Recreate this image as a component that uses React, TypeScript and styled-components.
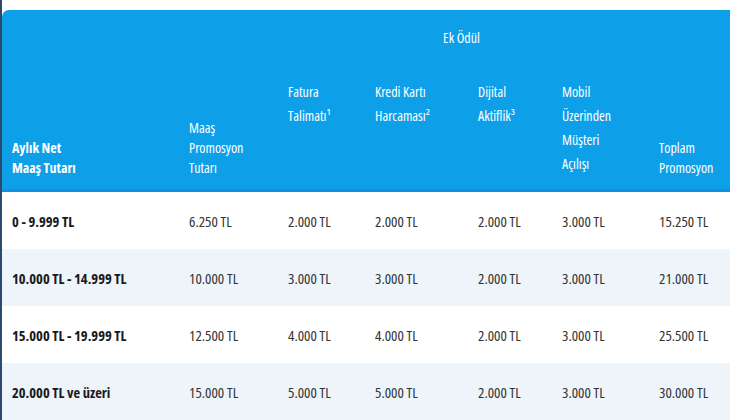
import React from 'react';
import styled, { createGlobalStyle } from 'styled-components';

const rows = [
  { range: '0 - 9.999 TL', values: ['6.250 TL', '2.000 TL', '2.000 TL', '2.000 TL', '3.000 TL', '15.250 TL'] },
  { range: '10.000 TL - 14.999 TL', values: ['10.000 TL', '3.000 TL', '3.000 TL', '2.000 TL', '3.000 TL', '21.000 TL'] },
  { range: '15.000 TL - 19.999 TL', values: ['12.500 TL', '4.000 TL', '4.000 TL', '2.000 TL', '3.000 TL', '25.500 TL'] },
  { range: '20.000 TL ve üzeri', values: ['15.000 TL', '5.000 TL', '5.000 TL', '2.000 TL', '3.000 TL', '30.000 TL'] },
];

const widths = [175, 99, 87, 103, 84, 97, 83];

const App: React.FC = () => {
  return (
    <>
      <GlobalStyle />
      <Wrapper>
        <Table>
          <colgroup>
            {widths.map((w, i) => (
              <col key={i} style={{ width: w }} />
            ))}
          </colgroup>
          <thead>
            <TopRow>
              <Th rowSpan={2} $bottom $bold>
                Aylık Net
                <br />
                Maaş Tutarı
              </Th>
              <Th rowSpan={2} $bottom>
                Maaş
                <br />
                Promosyon
                <br />
                Tutarı
              </Th>
              <GroupTh colSpan={4}>Ek Ödül</GroupTh>
              <Th rowSpan={2} $bottom>
                Toplam
                <br />
                Promosyon
              </Th>
            </TopRow>
            <SubRow>
              <SubTh>
                Fatura
                <br />
                Talimatı¹
              </SubTh>
              <SubTh>
                Kredi Kartı
                <br />
                Harcaması²
              </SubTh>
              <SubTh>
                Dijital
                <br />
                Aktiflik³
              </SubTh>
              <SubTh>
                Mobil
                <br />
                Üzerinden
                <br />
                Müşteri
                <br />
                Açılışı
              </SubTh>
            </SubRow>
          </thead>
          <tbody>
            {rows.map((r, i) => (
              <Row key={r.range} $alt={i % 2 === 1}>
                <RangeCell>{r.range}</RangeCell>
                {r.values.map((v, j) => (
                  <Cell key={j}>{v}</Cell>
                ))}
              </Row>
            ))}
          </tbody>
        </Table>
      </Wrapper>
    </>
  );
};

export default App;

const GlobalStyle = createGlobalStyle`
  body {
    margin: 0;
    background: #ffffff;
    font-family: "Open Sans", "DejaVu Sans Condensed", sans-serif;
    font-stretch: 75%;
  }
`;

const Wrapper = styled.div`
  width: 730px;
  height: 420px;
  overflow: hidden;
  padding-top: 10px;
  box-sizing: border-box;
  border-left: 2px solid #2c4a6e;
  background: #ffffff;
`;

const Table = styled.table`
  width: 728px;
  border-collapse: separate;
  border-spacing: 0;
  table-layout: fixed;
  font-stretch: 75%;
`;

const TopRow = styled.tr`
  height: 58px;
`;

const SubRow = styled.tr`
  height: 124px;
`;

const Th = styled.th<{ $bottom?: boolean; $bold?: boolean }>`
  background: #0e9fe9;
  color: #ffffff;
  font-size: 14px;
  line-height: 20px;
  font-weight: ${(p) => (p.$bold ? 700 : 400)};
  text-align: left;
  vertical-align: ${(p) => (p.$bottom ? 'bottom' : 'top')};
  padding: 0 0 11px 12px;
  border-bottom: 3px solid #1590d6;

  &:first-child {
    border-top-left-radius: 7px;
    padding-left: 10px;
  }
`;

const GroupTh = styled.th`
  background: #0e9fe9;
  color: #ffffff;
  font-size: 14px;
  font-weight: 400;
  text-align: center;
  vertical-align: middle;
  padding: 0 0 4px 0;
`;

const SubTh = styled.th`
  background: #0e9fe9;
  color: #ffffff;
  font-size: 14px;
  line-height: 24px;
  font-weight: 400;
  text-align: left;
  vertical-align: top;
  padding: 12px 0 0 12px;
  border-bottom: 3px solid #1590d6;
`;

const Row = styled.tr<{ $alt: boolean }>`
  height: 57px;
  background: ${(p) => (p.$alt ? '#edf4fa' : '#ffffff')};
`;

const Cell = styled.td`
  font-size: 15px;
  color: #333333;
  padding: 1px 0 0 12px;
  vertical-align: middle;
  white-space: nowrap;
`;

const RangeCell = styled(Cell)`
  font-size: 14.5px;
  font-weight: 700;
  color: #1a1a1a;
  padding-left: 10px;
`;
